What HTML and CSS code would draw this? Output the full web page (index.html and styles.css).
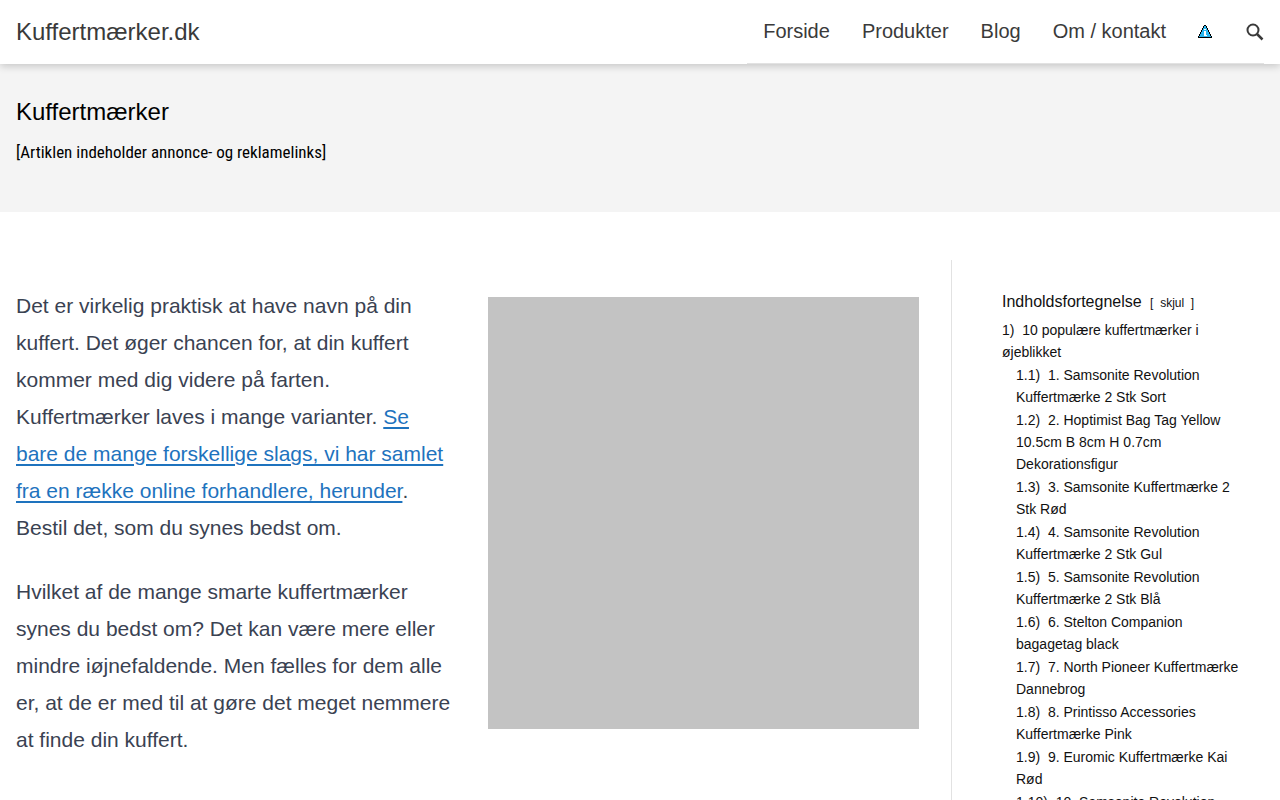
FILE: index.html
```
<!doctype html>
<html lang="da">
	<head>
		<title>Kuffertmærker</title>
		<meta charset="utf-8" />
		<meta name="viewport" content="width=device-width, initial-scale=1" />
		<link rel="stylesheet" href="styles.css">
	</head>
	<body>
		<header class="site-header">
			<a class="brand" href="#">Kuffertmærker.dk</a>
			<nav class="menu">
				<a href="#">Forside</a>
				<a href="#">Produkter</a>
				<a href="#">Blog</a>
				<a href="#">Om / kontakt</a>
				<a href="#" aria-label="Info">
					<svg width="14" height="14" viewBox="0 0 14 14" shape-rendering="crispEdges">
						<path d="M6 0h2v1h1v2h1v2h1v2h1v2h1v2h1v2H0v-2h1V9h1V7h1V5h1V3h1V1h1z" fill="#000" />
						<path d="M6 1h2v2h1v2h1v2h1v2h1v2h1v1H1v-1h1V9h1V7h1V5h1V3h1z" fill="#2ab7f1" />
						<path d="M6 4h2v1H6zM6 6h2v4h1v1H6z" fill="#fff" />
					</svg>
				</a>
				<button class="search" aria-label="Søg">
					<svg width="18" height="18" viewBox="0 0 18 18" fill="none" stroke="#3a3a3a" stroke-width="2">
						<circle cx="7" cy="7" r="5.5" />
						<path d="M11 11l5.500 5.500" stroke-width="2.500" />
					</svg>
				</button>
			</nav>
		</header>
		<section class="hero">
			<h1>Kuffertmærker</h1>
			<p>[Artiklen indeholder annonce- og reklamelinks]</p>
		</section>
		<div class="page">
			<main class="intro">
				<div class="text">
					<p>Det er virkelig praktisk at have navn på din kuffert. Det øger chancen for, at din kuffert kommer med dig videre på farten.<br>Kuffertmærker laves i mange varianter. <a href="#">Se<br>bare de mange forskellige slags, vi har samlet fra en række online forhandlere, herunder</a>.<br>Bestil det, som du synes bedst om.</p>
					<p>Hvilket af de mange smarte kuffertmærker synes du bedst om? Det kan være mere eller mindre iøjnefaldende. Men fælles for dem alle er, at de er med til at gøre det meget nemmere at finde din kuffert.</p>
				</div>
				<div class="photo"></div>
			</main>
			<aside class="sidebar">
				<div class="toc-title">Indholdsfortegnelse <span>[&nbsp; <a href="#">skjul</a> &nbsp;]</span></div>
				<ul class="toc">
					<li><a href="#">1)&nbsp; 10 populære kuffertmærker i øjeblikket</a>
						<ul>
							<li><a href="#">1.1)&nbsp; 1. Samsonite Revolution Kuffertmærke 2 Stk Sort</a></li>
							<li><a href="#">1.2)&nbsp; 2. Hoptimist Bag Tag Yellow 10.5cm B 8cm H 0.7cm Dekorationsfigur</a></li>
							<li><a href="#">1.3)&nbsp; 3. Samsonite Kuffertmærke 2 Stk Rød</a></li>
							<li><a href="#">1.4)&nbsp; 4. Samsonite Revolution Kuffertmærke 2 Stk Gul</a></li>
							<li><a href="#">1.5)&nbsp; 5. Samsonite Revolution Kuffertmærke 2 Stk Blå</a></li>
							<li><a href="#">1.6)&nbsp; 6. Stelton Companion bagagetag black</a></li>
							<li><a href="#">1.7)&nbsp; 7. North Pioneer Kuffertmærke Dannebrog</a></li>
							<li><a href="#">1.8)&nbsp; 8. Printisso Accessories Kuffertmærke Pink</a></li>
							<li><a href="#">1.9)&nbsp; 9. Euromic Kuffertmærke Kai Rød</a></li>
							<li><a href="#">1.10)&nbsp; 10. Samsonite Revolution</a></li>
						</ul>
					</li>
				</ul>
			</aside>
		</div>
	</body>
</html>
```
FILE: styles.css
```
* { margin: 0; padding: 0; box-sizing: border-box; }
body { font-family: "Liberation Sans", sans-serif; font-size: 21px; color: #3a4252; background: #fff; }
a { color: inherit; text-decoration: none; }
svg { display: block; }

.site-header { position: relative; display: flex; align-items: center; justify-content: space-between; height: 64px; padding: 0 16px; background: #fff; color: #3a3a3a; box-shadow: 0 2px 8px rgba(0, 0, 0, .2); }
.brand { font-size: 24px; }
.menu { display: flex; align-items: center; gap: 32px; height: 64px; padding-left: 16px; border-bottom: 1px solid #e2e2e2; font-size: 20px; }
.search { padding-left: 2px; border: 0; background: none; cursor: pointer; }

.hero { height: 148px; padding: 32px 16px; background: #f4f4f4; color: #000; }
.hero h1 { font-size: 24px; font-weight: normal; line-height: 32px; }
.hero p { margin-top: 12px; font-family: "Liberation Sans Narrow", "Roboto Condensed", Roboto, sans-serif; font-size: 17px; line-height: 24px; }

.page { display: grid; grid-template-columns: 1fr 329px; margin-top: 48px; }
.intro { display: grid; grid-template-columns: 1fr 1fr; align-items: start; gap: 40px; padding: 27px 32px 0 16px; }
.text { margin-right: -16px; }
.text p { line-height: 37px; margin-bottom: 27px; }
.text a { color: #1e73be; text-decoration: underline; text-decoration-thickness: 2px; text-underline-offset: 3px; }
.photo { aspect-ratio: 1; margin-top: 10px; background: #c3c3c3; }

.sidebar { padding: 30px 32px 0 50px; border-left: 1px solid #e2e2e2; color: #111; }
.toc-title { font-size: 16px; line-height: 24px; margin-bottom: 4px; }
.toc-title span { font-size: 12px; margin-left: 4px; }
.toc { font-size: 14px; line-height: 22px; list-style: none; }
.toc ul { list-style: none; padding-left: 14px; }
.toc li li { margin-top: 1px; }
```
